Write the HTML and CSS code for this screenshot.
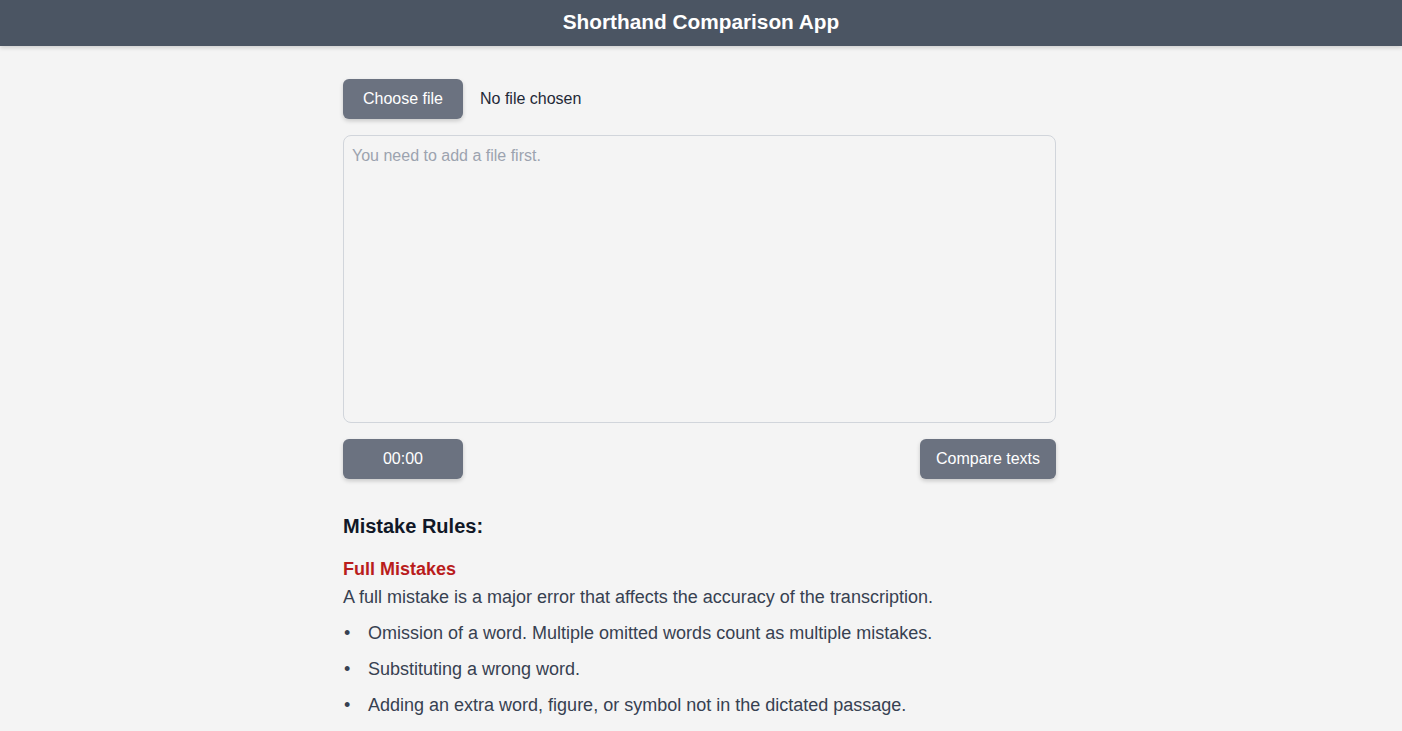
FILE: index.html
```html
<!DOCTYPE html>
<html lang="en">
<head>
<meta charset="utf-8">
<title>Shorthand Comparison App</title>
<link rel="stylesheet" href="styles.css">
</head>
<body>
<header class="topbar"><h1 class="title">Shorthand Comparison App</h1></header>
<main class="container">
  <div class="file-row">
    <label class="btn file-btn">Choose file</label>
    <span class="file-status">No file chosen</span>
  </div>
  <textarea class="text-input" placeholder="You need to add a file first."></textarea>
  <div class="controls">
    <button class="btn timer">00:00</button>
    <button class="btn compare">Compare texts</button>
  </div>
  <section class="rules">
    <h2 class="rules-title">Mistake Rules:</h2>
    <h3 class="rule-head">Full Mistakes</h3>
    <p class="rule-desc">A full mistake is a major error that affects the accuracy of the transcription.</p>
    <ul class="rule-list">
      <li>Omission of a word. Multiple omitted words count as multiple mistakes.</li>
      <li>Substituting a wrong word.</li>
      <li>Adding an extra word, figure, or symbol not in the dictated passage.</li>
    </ul>
  </section>
</main>
</body>
</html>
```
FILE: styles.css
```css
* { box-sizing: border-box; }
html, body { margin: 0; padding: 0; }
body {
  background: #f4f4f4;
  font-family: "Liberation Sans", Arial, sans-serif;
  color: #374151;
  overflow: hidden;
}
.topbar {
  background: #4b5563;
  height: 46px;
  display: flex;
  align-items: center;
  justify-content: center;
  padding-bottom: 2px;
  box-shadow: 0 2px 4px rgba(0,0,0,0.15);
}
.title {
  margin: 0;
  color: #ffffff;
  font-size: 20.8px;
  font-weight: bold;
}
.container {
  width: 713px;
  margin-left: calc(50% - 358px);
  padding-top: 33px;
}
.file-row {
  display: flex;
  align-items: center;
  gap: 17px;
  height: 40px;
}
.btn {
  background: #6b7280;
  color: #ffffff;
  border: none;
  border-radius: 6px;
  font-family: "Liberation Sans", Arial, sans-serif;
  font-size: 16px;
  height: 40px;
  display: inline-flex;
  align-items: center;
  justify-content: center;
  box-shadow: 0 2px 4px rgba(0,0,0,0.18);
}
.file-btn { width: 120px; }
.file-status { font-size: 16px; color: #1f2937; }
.text-input {
  display: block;
  width: 100%;
  height: 288px;
  margin-top: 16px;
  border: 1px solid #d1d5db;
  border-radius: 8px;
  background: #f4f4f4;
  padding: 11px 8px 8px;
  font-family: "Liberation Sans", Arial, sans-serif;
  font-size: 16px;
  color: #374151;
  resize: none;
}
.text-input::placeholder { color: #9ca3af; }
.controls {
  display: flex;
  justify-content: space-between;
  margin-top: 16px;
}
.timer { width: 120px; }
.compare { width: 136px; }
.rules { margin-top: 33px; }
.rules-title {
  margin: 0;
  font-size: 20px;
  font-weight: bold;
  color: #111827;
  line-height: 28px;
}
.rule-head {
  margin: 16px 0 0;
  font-size: 18px;
  font-weight: bold;
  color: #b91c1c;
  line-height: 26px;
}
.rule-desc {
  margin: 1px 0 0;
  font-size: 18px;
  line-height: 28px;
}
.rule-list {
  margin: 8px 0 0;
  padding: 0;
  list-style: none;
  font-size: 18px;
  line-height: 28px;
}
.rule-list li {
  display: flex;
  margin-bottom: 8px;
}
.rule-list li::before {
  content: "\2022";
  flex: 0 0 24px;
  padding-left: 1px;
}
```
